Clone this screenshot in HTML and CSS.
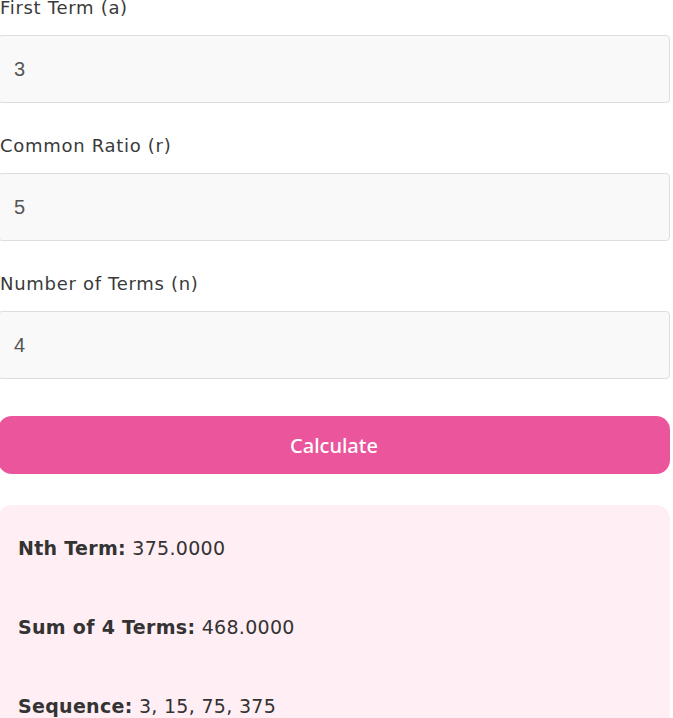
FILE: index.html
```html
<!DOCTYPE html>
<html>
<head>
<meta charset="utf-8">
<link rel="stylesheet" href="styles.css">
</head>
<body>
<div class="calc">
  <div class="field">
    <label class="label">First Term (a)</label>
    <input class="input" type="text" value="3">
  </div>
  <div class="field">
    <label class="label">Common Ratio (r)</label>
    <input class="input" type="text" value="5">
  </div>
  <div class="field">
    <label class="label">Number of Terms (n)</label>
    <input class="input" type="text" value="4">
  </div>
  <button class="btn">Calculate</button>
  <div class="result">
    <p class="line"><strong>Nth Term:</strong> 375.0000</p>
    <p class="line"><strong>Sum of 4 Terms:</strong> 468.0000</p>
    <p class="line"><strong>Sequence:</strong> 3, 15, 75, 375</p>
  </div>
</div>
</body>
</html>
```
FILE: styles.css
```css
html, body {
  margin: 0;
  padding: 0;
  background: #ffffff;
  overflow: hidden;
}
body {
  font-family: "DejaVu Sans", "Noto Sans", sans-serif;
  color: #333;
}
.calc {
  margin-left: -2px;
  width: 672px;
  margin-top: -5px;
  display: flex;
  flex-direction: column;
}
.field {
  display: flex;
  flex-direction: column;
  margin-bottom: 30px;
}
.label {
  font-size: 18px;
  line-height: 25px;
  letter-spacing: 0.7px;
  color: #3a3a3a;
  margin-bottom: 15px;
  padding-left: 2px;
}
.input {
  box-sizing: border-box;
  height: 68px;
  width: 100%;
  border: 1px solid #dedede;
  border-radius: 4px;
  background: #f9f9f9;
  padding: 0 15px;
  font-family: "Liberation Sans", Arial, sans-serif;
  font-size: 20px;
  color: #555;
  outline: none;
}
.btn {
  margin-top: 7px;
  height: 58px;
  border: none;
  border-radius: 14px;
  background: #ea559c;
  color: #fff;
  font-family: "Noto Sans", sans-serif;
  font-size: 20px;
  font-weight: 500;
  cursor: pointer;
}
.result {
  margin-top: 31px;
  background: #ffeef3;
  border-radius: 14px;
  padding: 29px 20px 20px;
}
.line {
  margin: 0 0 51px;
  font-size: 19px;
  line-height: 28px;
  letter-spacing: 0.3px;
  color: #333;
}
.line strong {
  font-weight: 700;
}
```
